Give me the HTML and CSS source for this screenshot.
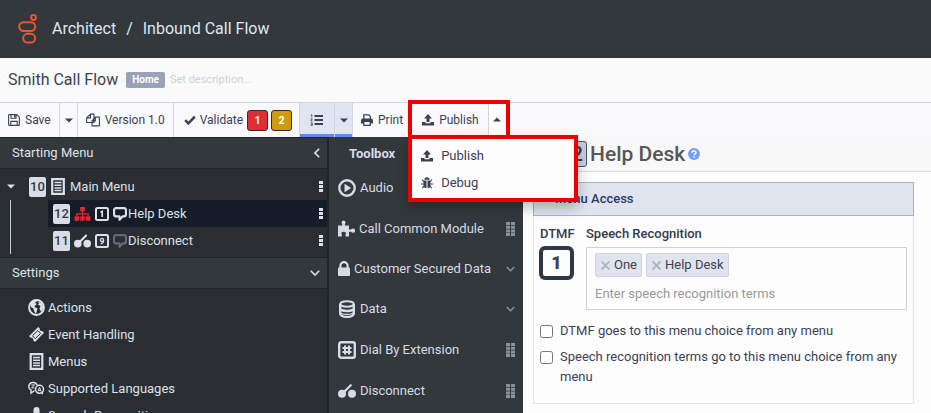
FILE: index.html
```html
<!DOCTYPE html>
<html lang="en">
<head>
<meta charset="utf-8">
<title>Architect - Inbound Call Flow</title>
<link rel="stylesheet" href="styles.css">
</head>
<body>
<svg class="sprite" aria-hidden="true">
  <symbol id="i-save" viewBox="0 0 12 12"><path d="M.6 1.5a1 1 0 0 1 1-.9h7.2l2.6 2.6v7.2a1 1 0 0 1-1 1H1.6a1 1 0 0 1-1-1zM3 .8v3.4h5V.8M2.8 11.2V7.4h6.400v3.800" fill="none" stroke="currentColor" stroke-width="1.1"/><path d="M6 1h1.400v2.400H6z" fill="currentColor"/></symbol>
  <symbol id="i-copy" viewBox="0 0 14 13"><path d="M4.500 .600H8v8.400H.600V4.400zM4.500 .600v3.800H.600M9.400 3.600h4v8.800H6V7.400zM9.400 3.600v3.800H6" fill="#f9f9fb" stroke="currentColor" stroke-width="1.1" stroke-linejoin="round"/></symbol>
  <symbol id="i-check" viewBox="0 0 12 10"><path d="M1.200 5.200l3.200 3.200L10.800 1.600" fill="none" stroke="currentColor" stroke-width="2.500"/></symbol>
  <symbol id="i-list" viewBox="0 0 13 12"><path d="M4.500 2H13M4.500 6H13M4.500 10H13" stroke="currentColor" stroke-width="1.900"/><path d="M.8 1.200L1.800.600v2.800M.5 5h1.800L.8 7h1.700M.5 9h1.800v2.400H.5M1 10.200h1.300" stroke="currentColor" stroke-width=".8" fill="none"/></symbol>
  <symbol id="i-print" viewBox="0 0 12 12"><path d="M2.800 5V.800h5L9.400 2.400V5" fill="none" stroke="currentColor" stroke-width="1.300"/><path d="M1.800 4.600h8.400A1.800 1.800 0 0 1 12 6.400V9.500H9.800V8H2.200v1.500H0V6.400a1.800 1.800 0 0 1 1.800-1.800z" fill="currentColor"/><path d="M2.800 8v3.300h6.400V8" fill="none" stroke="currentColor" stroke-width="1.300"/></symbol>
  <symbol id="i-upload" viewBox="0 0 12 12"><path d="M6 0L10 4.400H7.500V8h-3V4.400H2zM0 8h3.500v1.200h5V8H12v3.500H0z" fill="currentColor"/></symbol>
  <symbol id="i-bug" viewBox="0 0 12 12"><path d="M3.400 2.800a2.600 2.600 0 0 1 5.200 0zM2.600 3.600h2.900v7.600A3 3 0 0 1 2.600 8.200zM6.500 3.600h2.900v4.600a3 3 0 0 1-2.900 3z" fill="currentColor"/><path d="M3 4.800L1.200 2.500M9 4.800l1.800-2.300M3 7H0M9 7h3M3.200 8.800L1.200 11.200M8.800 8.800l2 2.400" stroke="currentColor" stroke-width="1.100"/></symbol>
  <symbol id="i-down" viewBox="0 0 8 5"><path d="M0 .5h8L4 4.500z" fill="currentColor"/></symbol>
  <symbol id="i-up" viewBox="0 0 8 5"><path d="M0 4.500h8L4 .5z" fill="currentColor"/></symbol>
  <symbol id="i-chev" viewBox="0 0 10 6"><path d="M.8.800L5 5 9.200.800" fill="none" stroke="currentColor" stroke-width="1.600"/></symbol>
  <symbol id="i-chevl" viewBox="0 0 6 10"><path d="M5.200.800L1 5l4.200 4.200" fill="none" stroke="currentColor" stroke-width="1.600"/></symbol>
  <symbol id="i-dots" viewBox="0 0 4 11"><path d="M0 0h4v3H0zM0 4h4v3H0zM0 8h4v3H0z" fill="currentColor"/></symbol>
  <symbol id="i-menu" viewBox="0 0 14 17"><path d="M1.200 1.200h11.600v14.600H1.200z" fill="none" stroke="currentColor" stroke-width="2.200"/><path d="M3.500 4.500h7M3.500 7.200h7M3.500 9.900h7M3.500 12.600h7" stroke="currentColor" stroke-width="1.500"/></symbol>
  <symbol id="i-tree" viewBox="0 0 17 15"><path d="M6 0h5v4.500H6zM0 10h4.800v4.800H0zM6.100 10h4.800v4.800H6.100zM12.200 10H17v4.800h-4.800z" fill="currentColor"/><path d="M8.500 4v6M2.400 10V7.300h12.200V10" fill="none" stroke="currentColor" stroke-width="1.400"/></symbol>
  <symbol id="i-key1" viewBox="0 0 14 14"><rect x="1" y="1" width="12" height="12" rx="1.500" fill="none" stroke="currentColor" stroke-width="2"/><path d="M5.500 5.200L7.200 4.300V10" fill="none" stroke="currentColor" stroke-width="1.700"/></symbol>
  <symbol id="i-key9" viewBox="0 0 14 14"><rect x="1" y="1" width="12" height="12" rx="1.500" fill="none" stroke="currentColor" stroke-width="2"/><circle cx="7" cy="6" r="1.600" fill="none" stroke="currentColor" stroke-width="1.300"/><path d="M8.600 6q.2 3.400-3 3.800" fill="none" stroke="currentColor" stroke-width="1.300"/></symbol>
  <symbol id="i-speech" viewBox="0 0 14 14"><path d="M3 1.200h8a2 2 0 0 1 2 2v3.600a2.600 2.600 0 0 1-2.600 2.600H9.500L6.500 12.800V9.400H3.600A2.600 2.600 0 0 1 1 6.800V3.200a2 2 0 0 1 2-2z" fill="none" stroke="currentColor" stroke-width="2.200" stroke-linejoin="round"/></symbol>
  <symbol id="i-hook" viewBox="0 0 18 14"><circle cx="4" cy="9.800" r="4" fill="currentColor"/><circle cx="14" cy="9.800" r="4" fill="currentColor"/><path d="M6 8l6.800-6.800" stroke="currentColor" stroke-width="2.200" stroke-linecap="round"/></symbol>
  <symbol id="i-globe" viewBox="0 0 17 17"><circle cx="8.500" cy="8.500" r="7.400" fill="none" stroke="currentColor" stroke-width="2"/><path d="M2 4Q5 .8 9 2L7 4l2 1-2 1.500L6.500 8l3 1.500L8 15 6 12 5.500 9.500 3 8 2.500 6zM10 2.500l4 2L15.500 9 13 13l-1.500-3.500L12.500 7 10 5.500l1-1z" fill="currentColor"/></symbol>
  <symbol id="i-ticket" viewBox="0 0 17 17"><path d="M10.200 1l1.700 1.700a1.700 1.700 0 0 0 2.300 2.200L16 6.700 7 16l-1.800-1.800A1.700 1.700 0 0 0 3 12L1 10.200z" fill="currentColor"/><path d="M9.800 4.500L12.600 7.400 7.200 12.700 4.400 9.800z" fill="none" stroke="#2a2e33" stroke-width="1"/></symbol>
  <symbol id="i-lang" viewBox="0 0 17 14"><path d="M6.500 9.500H6l-3 2V8.500A3.600 3.600 0 0 1 .8 5 4 4 0 0 1 5 1a4 4 0 0 1 4 2.800" fill="none" stroke="currentColor" stroke-width="1.500"/><circle cx="11.500" cy="7.800" r="4" fill="#2a2e33" stroke="currentColor" stroke-width="1.500"/><path d="M13 10.800l2 2.700v-4" fill="currentColor"/><path d="M9.900 10l1.600-4.200L13.100 10M10.300 8.800h2.400M3.400 3.400h3.200L3.600 6.400h2.800" fill="none" stroke="currentColor" stroke-width="1"/></symbol>
  <symbol id="i-mic" viewBox="0 0 12 17"><rect x="3" y="0" width="6" height="11" rx="3" fill="currentColor"/><path d="M1 6v3a5 5 0 0 0 10 0V6M6 14v3M3 16.500h6" fill="none" stroke="currentColor" stroke-width="1.500"/></symbol>
  <symbol id="i-play" viewBox="0 0 18 18"><circle cx="9" cy="9" r="7.700" fill="none" stroke="currentColor" stroke-width="2.400"/><path d="M6.500 4.800L13.200 9l-6.700 4.200z" fill="currentColor"/></symbol>
  <symbol id="i-puzzle" viewBox="0 0 17 16"><path d="M0 5h4.200V3.500Q3.400 2.500 3.600 1.600A2 2 0 0 1 7.500 1.600Q7.700 2.500 6.900 3.500V5H11v4h2q1-1 2-.9a2 2 0 0 1 0 4.200q-1 0-2-1h-2V16H7.500v-2Q8.300 13 7.400 11.800q-1.800-1.300-3.600 0Q3 13 3.800 14v2H0z" fill="currentColor"/></symbol>
  <symbol id="i-lock" viewBox="0 0 12 16"><path d="M2.400 7V4.800a3.600 3.600 0 0 1 7.200 0V7" fill="none" stroke="currentColor" stroke-width="2.200"/><rect y="6.500" width="12" height="8.500" rx="1" fill="currentColor"/></symbol>
  <symbol id="i-data" viewBox="0 0 16 18"><ellipse cx="8" cy="4" rx="6.800" ry="2.800" fill="none" stroke="currentColor" stroke-width="2"/><path d="M1.200 4v9.800C1.200 15.500 4 17 8 17s6.800-1.500 6.800-3.200V4M1.200 8.200c0 1.600 3 2.800 6.800 2.800s6.800-1.200 6.800-2.800" fill="none" stroke="currentColor" stroke-width="2.400"/><path d="M1.200 11.800c0 1.600 3 2.600 6.800 2.600s6.800-1 6.800-2.600" fill="none" stroke="currentColor" stroke-width="1.200"/></symbol>
  <symbol id="i-hash" viewBox="0 0 18 18"><rect x="1.200" y="1.200" width="15.600" height="15.600" rx="2" fill="none" stroke="currentColor" stroke-width="2.400"/><path d="M7 4.500v9M11 4.500v9M4.500 7h9M4.500 11h9" stroke="currentColor" stroke-width="2"/></symbol>
  <symbol id="i-grip" viewBox="0 0 9 14"><path d="M0 0h4v3H0zM5 0h4v3H5zM0 3.700h4v3H0zM5 3.700h4v3H5zM0 7.400h4v3H0zM5 7.400h4v3H5zM0 11.100h4v3H0zM5 11.100h4v3H5z" fill="currentColor"/></symbol>
  <symbol id="i-x" viewBox="0 0 8 8"><path d="M.5.500l7 7M7.500.500l-7 7" stroke="currentColor" stroke-width="1.700"/></symbol>
  <symbol id="i-help" viewBox="0 0 12 12"><circle cx="6" cy="6" r="6" fill="#71a1f8"/><path d="M4 4.700C4 2.500 8 2.500 8 4.600 8 6 6.200 5.800 6.200 7.300M6.200 8.200v1.500" fill="none" stroke="#fff" stroke-width="1.400"/></symbol>
</svg>

<header class="topbar">
  <svg class="logo" viewBox="0 0 20 30" fill="none" stroke="#f0532d" stroke-width="2"><circle cx="15.500" cy="3.500" r="2.400"/><rect x="1.200" y="8.200" width="16" height="8.800" rx="4.400"/><rect x="5.200" y="19.800" width="12" height="8.800" rx="4.400"/></svg>
  <nav class="crumbs"><a href="#">Architect</a><span>/</span><a href="#">Inbound Call Flow</a></nav>
</header>

<div class="namebar">
  <h1>Smith Call Flow</h1>
  <span class="badge">Home</span>
  <span class="describe">Set description...</span>
</div>

<div class="toolbar">
  <button class="tool save"><svg class="s12"><use href="#i-save"/></svg>Save</button>
  <button class="tool caret" aria-label="Save options"><svg class="tri"><use href="#i-down"/></svg></button>
  <button class="tool version"><svg class="s14"><use href="#i-copy"/></svg>Version 1.0</button>
  <button class="tool validate"><svg class="check"><use href="#i-check"/></svg>Validate<span class="counts"><b class="count err">1</b><b class="count warn">2</b></span></button>
  <button class="tool list on" aria-label="Outline"><svg class="s13"><use href="#i-list"/></svg></button>
  <button class="tool caret on" aria-label="Outline options"><svg class="tri"><use href="#i-down"/></svg></button>
  <button class="tool print"><svg class="s12"><use href="#i-print"/></svg>Print</button>
  <div class="publish-group">
    <button class="tool publish"><svg class="s12"><use href="#i-upload"/></svg>Publish</button>
    <button class="tool caret" aria-label="Publish options" aria-expanded="true"><svg class="tri"><use href="#i-up"/></svg></button>
    <div class="dropdown">
      <button><svg class="s12"><use href="#i-upload"/></svg>Publish</button>
      <button><svg class="s12"><use href="#i-bug"/></svg>Debug</button>
    </div>
  </div>
</div>

<div class="workspace">
  <aside class="outline">
    <h2 class="section-head">Starting Menu<svg class="chevl"><use href="#i-chevl"/></svg></h2>
    <div class="tree">
      <div class="node root"><svg class="tri twisty"><use href="#i-down"/></svg><b class="num">10</b><svg class="menu-icon"><use href="#i-menu"/></svg><span>Main Menu</span><svg class="dots"><use href="#i-dots"/></svg></div>
      <div class="children">
        <div class="node selected"><b class="num">12</b><svg class="wide red"><use href="#i-tree"/></svg><svg class="s14"><use href="#i-key1"/></svg><svg class="s14"><use href="#i-speech"/></svg><span>Help Desk</span><svg class="dots"><use href="#i-dots"/></svg></div>
        <div class="node"><b class="num">11</b><svg class="wide"><use href="#i-hook"/></svg><svg class="s14"><use href="#i-key9"/></svg><svg class="s14 dim"><use href="#i-speech"/></svg><span>Disconnect</span><svg class="dots"><use href="#i-dots"/></svg></div>
      </div>
    </div>
    <h2 class="section-head">Settings<svg class="chev"><use href="#i-chev"/></svg></h2>
    <ul class="settings">
      <li><svg><use href="#i-globe"/></svg>Actions</li>
      <li><svg><use href="#i-ticket"/></svg>Event Handling</li>
      <li><svg><use href="#i-menu"/></svg>Menus</li>
      <li><svg><use href="#i-lang"/></svg>Supported Languages</li>
      <li><svg><use href="#i-mic"/></svg>Speech Recognition</li>
    </ul>
  </aside>

  <aside class="toolbox">
    <h2>Toolbox</h2>
    <ul>
      <li><svg class="ti"><use href="#i-play"/></svg><span>Audio</span><svg class="chev"><use href="#i-chev"/></svg></li>
      <li class="leaf"><svg class="ti puzzle"><use href="#i-puzzle"/></svg><span>Call Common Module</span><svg class="grip"><use href="#i-grip"/></svg></li>
      <li><svg class="ti lock"><use href="#i-lock"/></svg><span>Customer Secured Data</span><svg class="chev"><use href="#i-chev"/></svg></li>
      <li><svg class="ti"><use href="#i-data"/></svg><span>Data</span><svg class="chev"><use href="#i-chev"/></svg></li>
      <li class="leaf"><svg class="ti"><use href="#i-hash"/></svg><span>Dial By Extension</span><svg class="grip"><use href="#i-grip"/></svg></li>
      <li class="leaf"><svg class="ti"><use href="#i-hook"/></svg><span>Disconnect</span><svg class="grip"><use href="#i-grip"/></svg></li>
    </ul>
  </aside>

  <main class="editor">
    <div class="title"><b class="title-num">12</b><h2>Help Desk</h2><svg class="s12"><use href="#i-help"/></svg></div>
    <section class="access">
      <h3>Menu Access</h3>
      <div class="fields">
        <div class="dtmf"><span class="label">DTMF</span><button class="key" aria-label="DTMF 1">1</button></div>
        <div class="speech">
          <label class="label" for="terms">Speech Recognition</label>
          <div class="tokens">
            <div class="chips"><span class="chip"><svg><use href="#i-x"/></svg>One</span><span class="chip"><svg><use href="#i-x"/></svg>Help Desk</span></div>
            <input id="terms" type="text" placeholder="Enter speech recognition terms">
          </div>
        </div>
      </div>
      <label class="option"><input type="checkbox"><span>DTMF goes to this menu choice from any menu</span></label>
      <label class="option"><input type="checkbox"><span>Speech recognition terms go to this menu choice from any menu</span></label>
    </section>
  </main>
</div>
</body>
</html>
```
FILE: styles.css
```css
* { box-sizing: border-box; }

body {
  margin: 0;
  height: 100vh;
  display: flex;
  flex-direction: column;
  overflow: hidden;
  font: 13px/20px Roboto, "Liberation Sans", sans-serif;
  color: #3b4152;
  background: #fdfdfd;
}

h1, h2, h3, ul { margin: 0; padding: 0; font-weight: 400; }
ul { list-style: none; }
button { font: inherit; color: inherit; border: 0; background: none; padding: 0; }
svg { flex: none; }

.sprite { position: absolute; width: 0; height: 0; }
.s12 { width: 12px; height: 12px; }
.s13 { width: 13px; height: 12px; }
.s14 { width: 14px; height: 14px; }
.check { width: 12px; height: 10px; }
.tri { width: 8px; height: 5px; }
.chev { width: 10px; height: 6px; }
.chevl { width: 6px; height: 10px; }

.topbar {
  flex: none;
  display: flex;
  align-items: center;
  gap: 14px;
  height: 58px;
  padding-left: 18px;
  background: #33383d;
}
.logo { width: 20px; height: 30px; }
.crumbs { display: flex; gap: 10px; font-size: 16px; color: #dfe7ed; }
.crumbs a { color: inherit; text-decoration: none; }

.namebar {
  flex: none;
  display: flex;
  align-items: center;
  gap: 8px;
  height: 44px;
  padding-left: 8px;
  background: #fafafa;
}
.namebar h1 { font-size: 16px; }
.badge {
  padding: 0 6px;
  border-radius: 2px;
  background: #98a2b8;
  color: #fff;
  font-size: 10px;
  line-height: 16px;
  font-weight: 700;
}
.describe { margin-left: -3px; font-size: 11px; color: #cfd1da; }

.toolbar {
  flex: none;
  display: flex;
  height: 35px;
  border-top: 1px solid #d4d6df;
  background: #f9f9fb;
}
.tool {
  display: flex;
  align-items: center;
  gap: 5px;
  padding: 0 8px;
  border-right: 1px solid #d4d6df;
  font-size: 12px;
}
.caret { padding: 0 4px 0 5px; }
.version { padding: 0 8px; }
.validate { padding: 0 7px 0 10px; gap: 4px; }
.on { background: #e0e5f1; box-shadow: inset 0 -3px #5b8def; }
.list { padding: 0 11px 0 10px; }
.print { padding: 0 5px 0 8px; border: 0; }
.counts { display: flex; gap: 3px; }
.count {
  width: 21px;
  line-height: 19px;
  border: 1px solid #382a28;
  border-radius: 3px;
  color: #fff;
  font-size: 10px;
  text-align: center;
}
.err { background: #df2f36; }
.warn { background: #cf9a0b; }

.publish-group {
  position: relative;
  z-index: 2;
  display: flex;
  margin: -3px 0 -2px;
  border: 4px solid #ee0000;
}
.publish { padding: 0 9px 0 10px; }
.publish + .caret { border: 0; padding: 0 5px 0 4px; background: #fff; }
.dropdown {
  position: absolute;
  top: 31px;
  left: -4px;
  width: 170px;
  padding: 3px 0 2px;
  border: 4px solid #ee0000;
  background: #fdfdfd;
  box-shadow: 0 6px 12px rgba(0, 0, 0, .25);
}
.dropdown button {
  display: flex;
  align-items: center;
  gap: 8px;
  width: 100%;
  height: 27px;
  padding-left: 9px;
}

.workspace {
  flex: 1;
  min-height: 0;
  display: grid;
  grid-template-columns: 329px 194px 1fr;
}

.outline {
  border-top: 1px solid #20242a;
  border-right: 2px solid #20252a;
  overflow: hidden;
  background: #2a2e33;
  color: #dbe1ea;
}
.section-head {
  display: flex;
  align-items: center;
  justify-content: space-between;
  height: 31px;
  padding: 0 7px 0 12px;
  border-bottom: 1px solid #20242a;
  background: #33383d;
  font-size: 13px;
}
.tree { padding: 4px 0 3px; border-bottom: 1px solid #20242a; }
.node {
  display: flex;
  align-items: center;
  gap: 5px;
  height: 27px;
  padding-right: 4px;
}
.node span { flex: 1; }
.root { padding-left: 7px; }
.twisty { margin-right: 9px; }
.children { margin-left: 10px; border-left: 1px solid #c5cbd5; }
.children .node { gap: 4px; margin-left: 37px; padding-left: 5px; }
.children span { margin-left: -3px; }
.selected { background: #151d29; }
.num {
  width: 17px;
  border-radius: 2px;
  background: #d8dce8;
  color: #343b47;
  font-size: 13px;
  font-weight: 500;
  text-align: center;
}
.menu-icon { width: 14px; height: 17px; }
.wide { width: 17px; height: 14px; }
.red { color: #e5282c; }
.dim { color: #656b74; }
.dots { width: 4px; height: 11px; }

.settings { padding-top: 5px; }
.settings li { display: flex; align-items: center; gap: 3px; height: 27px; padding-left: 28px; }
.settings svg { width: 17px; height: 17px; }

.toolbox { overflow: hidden; background: #33383d; color: #d6dbe6; }
.toolbox h2 { padding: 7px 20px 4px; font-size: 13px; font-weight: 700; }
.toolbox li { display: flex; align-items: center; gap: 4px; height: 40px; padding: 0 8px 0 9px; }
.toolbox .leaf { height: 41px; }
.toolbox span { flex: 1; white-space: nowrap; }
.toolbox .ti { width: 18px; height: 18px; }
.toolbox .puzzle { width: 17px; height: 17px; }
.toolbox .lock { width: 12px; height: 16px; }
.toolbox .chev { color: #8b929c; width: 9px; }
.grip { width: 9px; height: 14px; color: #8b9099; }

.editor { min-width: 0; }
.title {
  display: flex;
  align-items: center;
  gap: 3px;
  height: 35px;
  padding-left: 29px;
  border-bottom: 1px solid #dcdde2;
  background: #f8f8f8;
}
.title h2 { font-size: 21px; font-weight: 500; color: #565756; }
.title-num {
  width: 35px;
  line-height: 24px;
  border: 1px solid #4b5161;
  border-radius: 3px;
  background: #c8d0de;
  font-size: 21px;
  font-weight: 500;
  text-align: right;
  padding-right: 3px;
}
.access { margin: 10px 17px 10px 10px; border: 1px solid #e3e5ea; padding-bottom: 10px; }
.access h3 {
  margin: -1px;
  padding: 6px 21px;
  line-height: 20px;
  border: 1px solid #aab1c4;
  background: #e0e4ee;
  color: #2a3b69;
  font-size: 13px;
  font-weight: 500;
}
.fields { display: flex; gap: 12px; padding: 9px 6px 11px 5px; }
.label { display: block; font-weight: 500; line-height: 20px; color: #343a4c; }
.dtmf { width: 35px; white-space: nowrap; }
.dtmf .label { padding-left: 1px; }
.key {
  width: 35px;
  height: 34px;
  margin-top: 2px;
  border: 4px solid #2f3849;
  border-radius: 6px;
  font-size: 18px;
  font-weight: 900;
}
.speech { flex: 1; min-width: 0; }
.tokens { margin-top: 3px; padding: 5px 8px; border: 1px solid #d0d2d6; }
.chips { display: flex; gap: 4px; }
.chip {
  display: flex;
  align-items: center;
  gap: 4px;
  height: 24px;
  padding: 0 4px 0 5px;
  border: 1px solid #cfd3de;
  border-radius: 2px;
  background: #e0e4ee;
}
.chip svg { width: 9px; height: 9px; color: #b0b4bd; }
.tokens input {
  display: block;
  width: 100%;
  height: 20px;
  margin-top: 7px;
  padding: 0;
  border: 0;
  background: none;
  font: inherit;
}
.tokens input::placeholder { color: #999; opacity: 1; }
.option { display: flex; align-items: flex-start; gap: 7px; padding: 0 6px; margin-bottom: 6px; }
.option input { flex: none; width: 13px; height: 13px; margin: 4px 0 0; }
```
